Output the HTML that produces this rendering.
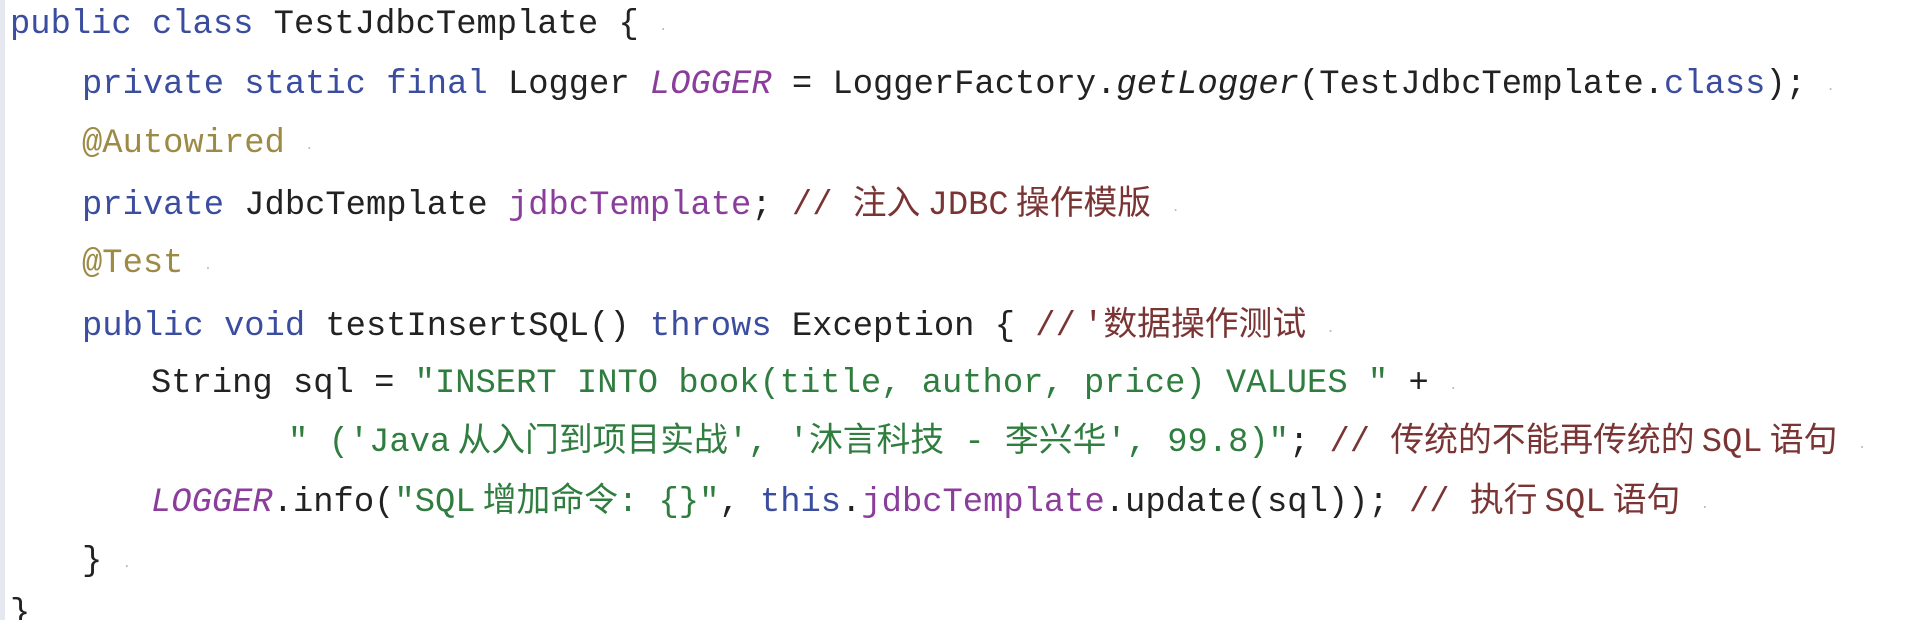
<!DOCTYPE html>
<html><head><meta charset="utf-8"><style>
html,body{margin:0;padding:0;background:#fff;width:1908px;height:620px;overflow:hidden;position:relative}
.bar{position:absolute;left:0;top:0;width:5px;height:620px;background:#e6e8ef}
.l{position:absolute;left:0;white-space:pre;font-family:"Liberation Mono","Noto Sans CJK SC",monospace;font-size:33.8px;line-height:60px;height:60px;color:#222}
.k{color:#3a4d9e}.p{color:#8b3d9c}.i{font-style:italic}.a{color:#9c8a45}.s{color:#2f7d3f}.c{color:#7a3434}.d{color:#bbb;font-size:14px}
.t{font-size:12px}
</style></head><body>
<div class="bar"></div>
<div class="l" style="top:-5px;left:10px"><span class="k">public class</span> TestJdbcTemplate { <span class="d">·</span></div>
<div class="l" style="top:55px;left:82px"><span class="k">private static final</span> Logger <span class="p i">LOGGER</span> = LoggerFactory.<span class="i">getLogger</span>(TestJdbcTemplate.<span class="k">class</span>); <span class="d">·</span></div>
<div class="l" style="top:114px;left:82px"><span class="a">@Autowired</span> <span class="d">·</span></div>
<div class="l" style="top:176px;left:82px"><span class="k">private</span> JdbcTemplate <span class="p">jdbcTemplate</span>; <span class="c">// 注入<span class="t"> </span>JDBC<span class="t"> </span>操作模版</span> <span class="d">·</span></div>
<div class="l" style="top:234px;left:82px"><span class="a">@Test</span> <span class="d">·</span></div>
<div class="l" style="top:297px;left:82px"><span class="k">public void</span> testInsertSQL() <span class="k">throws</span> Exception { <span class="c">//<span class="t"> </span>'数据操作测试</span> <span class="d">·</span></div>
<div class="l" style="top:354px;left:151px">String sql = <span class="s">"INSERT INTO book(title, author, price) VALUES "</span> + <span class="d">·</span></div>
<div class="l" style="top:413px;left:288px"><span class="s">" ('Java<span class="t"> </span>从入门到项目实战', '沐言科技 - 李兴华', 99.8)"</span>; <span class="c">// 传统的不能再传统的<span class="t"> </span>SQL<span class="t"> </span>语句</span> <span class="d">·</span></div>
<div class="l" style="top:473px;left:151px"><span class="p i">LOGGER</span>.info(<span class="s">"SQL<span class="t"> </span>增加命令: {}"</span>, <span class="k">this</span>.<span class="p">jdbcTemplate</span>.update(sql)); <span class="c">// 执行<span class="t"> </span>SQL<span class="t"> </span>语句</span> <span class="d">·</span></div>
<div class="l" style="top:532px;left:82px">} <span class="d">·</span></div>
<div class="l" style="top:584px;left:10px">}</div>
</body></html>
